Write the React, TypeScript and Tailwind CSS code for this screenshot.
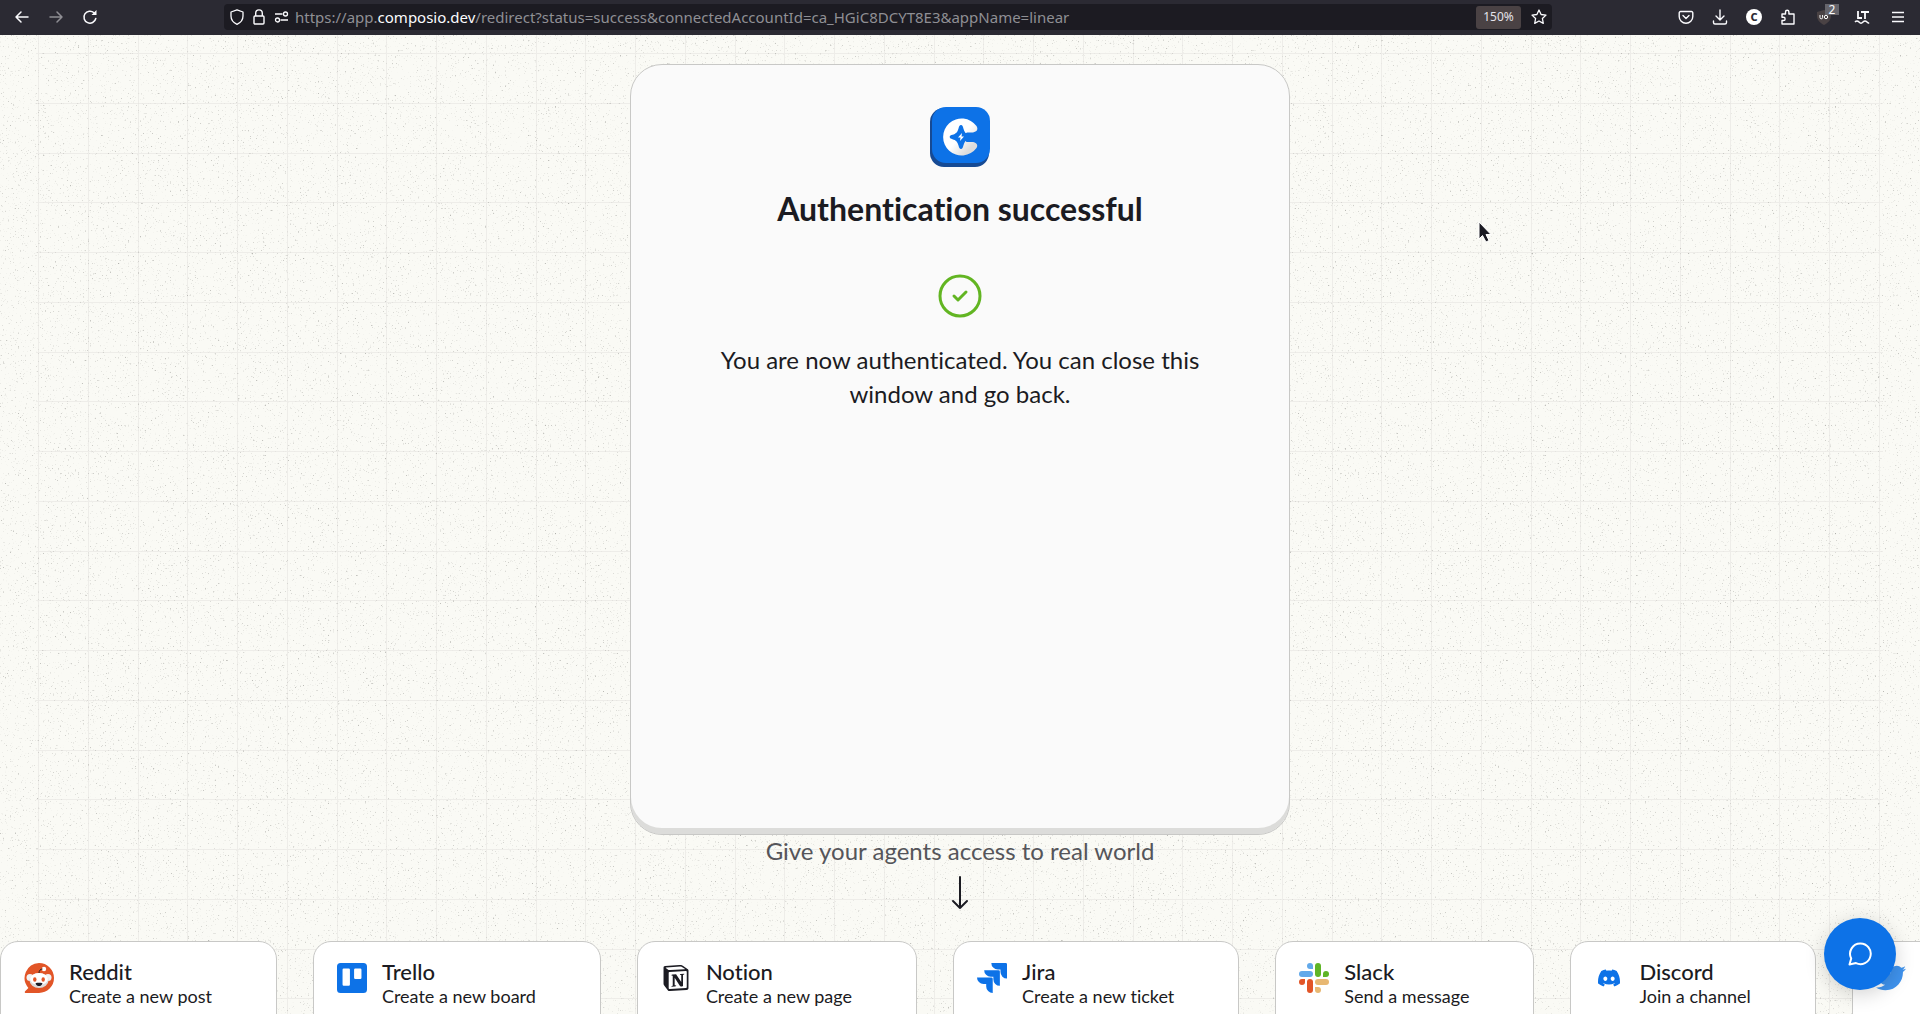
import React from "react";
import { FaTwitter } from "react-icons/fa";
import { SiTrello, SiNotion, SiJira, SiDiscord } from "react-icons/si";

const SlackIcon = () => (
  <svg viewBox="0 0 30 30" className="w-[30px] h-[30px] shrink-0">
    <g fill="#62a9ea">
      <rect x="0" y="8" width="14" height="6" rx="3" />
      <path d="M11 0a3 3 0 0 1 3 3v3h-3a3 3 0 0 1 0-6z" />
    </g>
    <g fill="#5fb526">
      <rect x="16" y="0" width="6" height="14" rx="3" />
      <path d="M24 14v-3a3 3 0 1 1 3 3z" />
    </g>
    <g fill="#e8b872">
      <rect x="16" y="16" width="14" height="6" rx="3" />
      <path d="M16 24h3a3 3 0 1 1-3 3z" />
    </g>
    <g fill="#e25527">
      <rect x="8" y="16" width="6" height="14" rx="3" />
      <path d="M6 16v3a3 3 0 1 1-3-3z" />
    </g>
  </svg>
);

const RedditIcon = () => (
  <svg viewBox="0 0 30 30" className="w-[30px] h-[30px] shrink-0">
    <path
      d="M15 0a15 15 0 1 1 0 30H1.800c-1 0-1.400-1.100-.7-1.800l3.300-3.300A15 15 0 0 1 15 0z"
      fill="#e25527"
    />
    <circle cx="6" cy="14.500" r="3.500" fill="#f2f2f2" />
    <circle cx="24" cy="14.500" r="3.500" fill="#f2f2f2" />
    <ellipse cx="15" cy="17.500" rx="9.500" ry="7.500" fill="#dcdcdc" />
    <ellipse cx="15" cy="16" rx="9" ry="6" fill="#ffffff" />
    <circle cx="20" cy="6" r="2.200" fill="#ffffff" />
    <path d="M15 10c0-2.500 1.500-4 3.500-4" stroke="#222" strokeWidth="1" fill="none" />
    <ellipse cx="10.800" cy="16.500" rx="1.700" ry="2.200" fill="#e25527" />
    <ellipse cx="19.200" cy="16.500" rx="1.700" ry="2.200" fill="#e25527" />
    <path d="M11.500 20.200c2-.5 5-.5 7 0-.5 1.800-1.800 2.900-3.500 2.900s-3-1.100-3.500-2.900z" fill="#1b1b24" />
  </svg>
);

const apps = [
  { name: "Reddit", action: "Create a new post", icon: <RedditIcon /> },
  {
    name: "Trello",
    action: "Create a new board",
    icon: <SiTrello className="w-[30px] h-[30px] shrink-0 text-[#0d72e7]" />,
  },
  {
    name: "Notion",
    action: "Create a new page",
    icon: <SiNotion className="w-[30px] h-[30px] p-[2px] shrink-0 text-[#1b1b22]" />,
  },
  {
    name: "Jira",
    action: "Create a new ticket",
    icon: <SiJira className="w-[30px] h-[30px] shrink-0 text-[#0d72e7]" />,
  },
  { name: "Slack", action: "Send a message", icon: <SlackIcon /> },
  {
    name: "Discord",
    action: "Join a channel",
    icon: <SiDiscord className="w-[30px] h-[30px] p-1 shrink-0 text-[#0d72e7]" />,
  },
  {
    name: "Twitter",
    action: "Create a new tweet",
    icon: <FaTwitter className="w-[30px] h-[30px] shrink-0 text-[#3f93ee]" />,
  },
];

const BrowserBar = () => {
  return (
    <header className="h-[35px] pb-px shrink-0 bg-[#2b2a33] flex items-center text-[#fbfbfe] font-['Noto_Sans',sans-serif]">
      <nav className="flex items-center gap-[18px] pl-[14px] w-[224px] shrink-0">
        <button aria-label="Back">
          <svg viewBox="0 0 16 16" className="w-4 h-4" fill="none" stroke="currentColor" strokeWidth="1.500" strokeLinecap="round" strokeLinejoin="round">
            <path d="M14 8H2M7 3L2 8l5 5" />
          </svg>
        </button>
        <button aria-label="Forward" className="text-[#8f8e94]">
          <svg viewBox="0 0 16 16" className="w-4 h-4" fill="none" stroke="currentColor" strokeWidth="1.500" strokeLinecap="round" strokeLinejoin="round">
            <path d="M2 8h12M9 3l5 5-5 5" />
          </svg>
        </button>
        <button aria-label="Reload">
          <svg viewBox="0 0 16 16" className="w-4 h-4" fill="none" stroke="currentColor" strokeWidth="1.500" strokeLinecap="round">
            <path d="M13.800 9.500A6 6 0 1 1 12 3.700" />
            <path d="M14.500 1v5h-5z" fill="currentColor" stroke="none" />
          </svg>
        </button>
      </nav>
      <div className="flex flex-1 items-center h-[26px] bg-[#1c1b22] rounded-[4px] max-w-[1328px] px-[5px] gap-[6px]">
        <svg viewBox="0 0 16 16" className="w-4 h-4 shrink-0" fill="none" stroke="currentColor" strokeWidth="1.300">
          <path d="M8 .8l6 2.200v4c0 3.500-2 6.500-6 8.300C4 13.500 2 10.500 2 7V3z" strokeLinejoin="round" />
        </svg>
        <svg viewBox="0 0 16 16" className="w-4 h-4 shrink-0" fill="none" stroke="currentColor" strokeWidth="1.400">
          <rect x="3" y="7" width="10" height="8" rx="1" />
          <path d="M4.700 7V4.200a3.300 3.300 0 0 1 6.600 0V7" />
        </svg>
        <svg viewBox="0 0 16 16" className="w-4 h-4 shrink-0" fill="none" stroke="currentColor" strokeWidth="1.300">
          <path d="M2 5h7.500M7.500 11H15" />
          <circle cx="12.500" cy="5" r="2" />
          <circle cx="4.500" cy="11" r="2" />
        </svg>
        <p className="flex-1 text-[15px] leading-5 text-[#8f8f94] whitespace-nowrap">
          https://app.<span className="text-[#fbfbfe]">composio.dev</span>
          /redirect?status=success&amp;connectedAccountId=ca_HGiC8DCYT8E3&amp;appName=linear
        </p>
        <button className="h-[23px] w-[45px] rounded-[3px] bg-[#4a4244] text-[12px] text-[#e4e4ea]">
          150%
        </button>
        <button aria-label="Bookmark" className="ml-1">
          <svg viewBox="0 0 16 16" className="w-4 h-4" fill="none" stroke="currentColor" strokeWidth="1.300" strokeLinejoin="round">
            <path d="M8 1l2.100 4.500 4.900.6-3.600 3.400.9 4.900L8 12l-4.300 2.400.9-4.900L1 6.100l4.900-.6z" />
          </svg>
        </button>
      </div>
      <nav className="flex items-center gap-[18px] ml-auto pr-[14px]">
        <button aria-label="Pocket">
          <svg viewBox="0 0 16 16" className="w-4 h-4" fill="none" stroke="currentColor" strokeWidth="1.400" strokeLinecap="round" strokeLinejoin="round">
            <path d="M2.500 2.500h11a1.300 1.300 0 0 1 1.300 1.300V7.500a6.800 6.800 0 0 1-13.600 0V3.800a1.300 1.300 0 0 1 1.300-1.300z" />
            <path d="M5 6.500l3 3 3-3" />
          </svg>
        </button>
        <button aria-label="Downloads">
          <svg viewBox="0 0 16 16" className="w-4 h-4" fill="none" stroke="currentColor" strokeWidth="1.400" strokeLinecap="round" strokeLinejoin="round">
            <path d="M8 1v9.500M4 7l4 4 4-4M1.500 12v1.500a1.500 1.500 0 0 0 1.500 1.500h10a1.500 1.500 0 0 0 1.500-1.500V12" />
          </svg>
        </button>
        <button aria-label="Account" className="w-4 h-4 rounded-full bg-white text-[#2b2a33] text-[11px] leading-4 font-extrabold">
          C
        </button>
        <button aria-label="Extensions">
          <svg viewBox="0 0 16 16" className="w-4 h-4" fill="none" stroke="currentColor" strokeWidth="1.400" strokeLinejoin="round">
            <path d="M2 5h3.500V3a1.700 1.700 0 0 1 3.400 0v2H14v10H2v-3.500h1.500a1.600 1.600 0 0 0 0-3.200H2z" />
          </svg>
        </button>
        <button aria-label="uBlock Origin" className="relative w-5 h-4 flex justify-center">
          <svg viewBox="0 0 16 16" className="w-4 h-4">
            <path d="M8 1l7 2v4c0 4-3 7-7 9-4-2-7-5-7-9V3z" fill="#4a4244" />
            <path d="M4 6v2.500a1.300 1.300 0 0 0 2.600 0V6" stroke="#fff" fill="none" />
            <circle cx="10" cy="8" r="1.700" stroke="#fff" fill="none" />
          </svg>
          <span className="absolute -top-[5px] left-[11px] w-[14px] h-[11px] bg-[#66656c] text-[12px] leading-[11px]">
            2
          </span>
        </button>
        <button aria-label="LanguageTool" className="w-5 flex justify-center">
          <svg viewBox="0 0 16 16" className="w-4 h-4" fill="none" stroke="currentColor" strokeWidth="1.800">
            <path d="M4 2v7h4M7 3h8M11 3v7" />
            <path d="M1 13c1.300-1.500 2.600-1.500 4 0s2.600 1.500 4 0 2.600-1.500 4 0 1.500 1 2 .5" strokeWidth="1.500" />
          </svg>
        </button>
        <button aria-label="Menu">
          <svg viewBox="0 0 16 16" className="w-4 h-4" stroke="currentColor" strokeWidth="1.300">
            <path d="M2 3.500h12M2 8h12M2 12.500h12" />
          </svg>
        </button>
      </nav>
    </header>
  );
};

// paper grain and faint grid behind everything
const PaperBackground = () => (
  <svg className="absolute inset-0 w-full h-full" aria-hidden="true">
    <defs>
      <filter id="grain" x="0" y="0" width="100%" height="100%" colorInterpolationFilters="sRGB">
        <feTurbulence type="fractalNoise" baseFrequency="0.6" numOctaves="2" seed="7" />
        <feColorMatrix values="0 0 0 0 0.4  0 0 0 0 0.4  0 0 0 0 0.38  1.800 0 0 0 -1.180" />
      </filter>
      <pattern id="grid" x="2" y="18" width="199" height="199" patternUnits="userSpaceOnUse">
        <path
          d="M0 .5H199M0 50.500H199M0 100.500H199M0 149.500H199M.5 0V199M50.500 0V199M100.500 0V199M149.500 0V199"
          stroke="#eeede9"
        />
      </pattern>
    </defs>
    <svg x="36" width="96.200%" height="100%">
      <rect width="100%" height="100%" fill="url(#grid)" />
    </svg>
    <rect width="100%" height="100%" filter="url(#grain)" />
  </svg>
);

const ComposioLogo = () => (
  <svg viewBox="0 0 60 60" className="w-[60px] h-[60px]" aria-label="Composio">
    <defs>
      <linearGradient id="c-fill" x1="0" y1="0" x2="1" y2="1">
        <stop offset="0.5" stopColor="#ffffff" />
        <stop offset="0.8" stopColor="#dcdcdc" />
      </linearGradient>
    </defs>
    <rect y="1" width="59" height="59" rx="14" fill="#164a94" />
    <rect x="2" width="58" height="56" rx="14" fill="#0d72e7" />
    <path
      d="M46.500 19A18.500 18.500 0 1 0 46.500 41C48.500 37.500 46 35.500 43 35H36.500L33 31V28L37 25.500H43C47 24.500 48.500 22.500 46.500 19z"
      fill="url(#c-fill)"
    />
    <path
      d="M31 18c1.500 0 1.800 1.500 2.400 3.500 1 3.500 2 5 5 6.300v4.500c-3 1.200-4 3-5 6.200-.6 2-1 3.500-2.400 3.500s-1.900-1.500-2.500-3.500c-1.100-3.800-2.500-5.300-6-6.300-1.500-.5-2.800-.8-2.800-2.200s1.300-1.800 2.800-2.200c3.500-1 4.900-2.500 6-6.300.6-2 1-3.500 2.500-3.500z"
      fill="#0d72e7"
    />
    <path d="M32 26l-4 4.500h2.500L30 34l4-4.500h-2.500z" fill="#ffffff" />
  </svg>
);

export default function App() {
  return (
    <div className="h-screen flex flex-col overflow-hidden font-[Lato,sans-serif] [font-variant-ligatures:none] text-[#1b1b22]">
      <BrowserBar />
      <main className="relative flex-1 min-h-0 overflow-hidden bg-[#fafaf5]">
        <PaperBackground />
        <div className="relative flex flex-col items-center pt-[29px]">
          <section className="w-[660px] h-[771px] rounded-[32px] border border-[#c8c8c6] bg-[#fafafa] shadow-[inset_0_-6px_0_#dcdcda] flex flex-col items-center pt-[42px]">
            <ComposioLogo />
            <h1 className="mt-6 text-[32px] leading-9 font-bold">
              Authentication successful
            </h1>
            <svg viewBox="0 0 44 44" className="mt-[47px] w-[44px] h-[44px]" fill="none" stroke="#62b522" strokeWidth="3" strokeLinecap="round" strokeLinejoin="round">
              <circle cx="22" cy="22" r="20" />
              <path d="M16 22l4 4 8-8" />
            </svg>
            <p className="mt-[25px] w-[510px] text-center text-[24px] leading-[34px]">
              You are now authenticated. You can close this window and go back.
            </p>
          </section>
          <p className="text-[24px] leading-8 text-[#55555a]">
            Give your agents access to real world
          </p>
          <svg viewBox="0 0 18 34" className="mt-[9px] w-[18px] h-[34px]" fill="none" stroke="#1b1b22" strokeWidth="2" strokeLinecap="round" strokeLinejoin="round">
            <path d="M9 1v31M2 25l7 7 7-7" />
          </svg>
          <ul className="mt-[31px] self-stretch flex gap-9">
            {apps.map((app) => (
              <li
                key={app.name}
                className="shrink-0 h-[110px] flex gap-[15px] rounded-[18px] border border-[#c8c8c6] bg-white pl-[23px] pr-16 pt-[21px]"
              >
                {app.icon}
                <div className="whitespace-nowrap -mt-[3px]">
                  <h2 className="text-[22px] leading-6 font-medium">{app.name}</h2>
                  <p className="text-[18px] leading-6">{app.action}</p>
                </div>
              </li>
            ))}
          </ul>
        </div>
        <button
          aria-label="Open chat"
          className="absolute right-6 bottom-6 w-[72px] h-[72px] rounded-full bg-[#0d72e7] shadow-[0_4px_20px_rgba(0,0,0,0.18)] flex items-center justify-center"
        >
          <svg viewBox="0 0 24 24" className="w-6 h-6" fill="none" stroke="#fff" strokeWidth="2" strokeLinejoin="round">
            <path d="M12.500 1.500a10.300 10.300 0 1 1-4.500 19.600L1.500 22.500l1.700-6A10.300 10.300 0 0 1 12.500 1.500z" />
          </svg>
        </button>
        <svg viewBox="0 0 16 24" className="absolute top-[186px] left-[1478px] w-4 h-6">
          <path d="M1 1v17l3.500-3.500L8 21l3-1.500-3-6h5z" fill="#1b1b22" stroke="#fff" />
        </svg>
      </main>
    </div>
  );
}
